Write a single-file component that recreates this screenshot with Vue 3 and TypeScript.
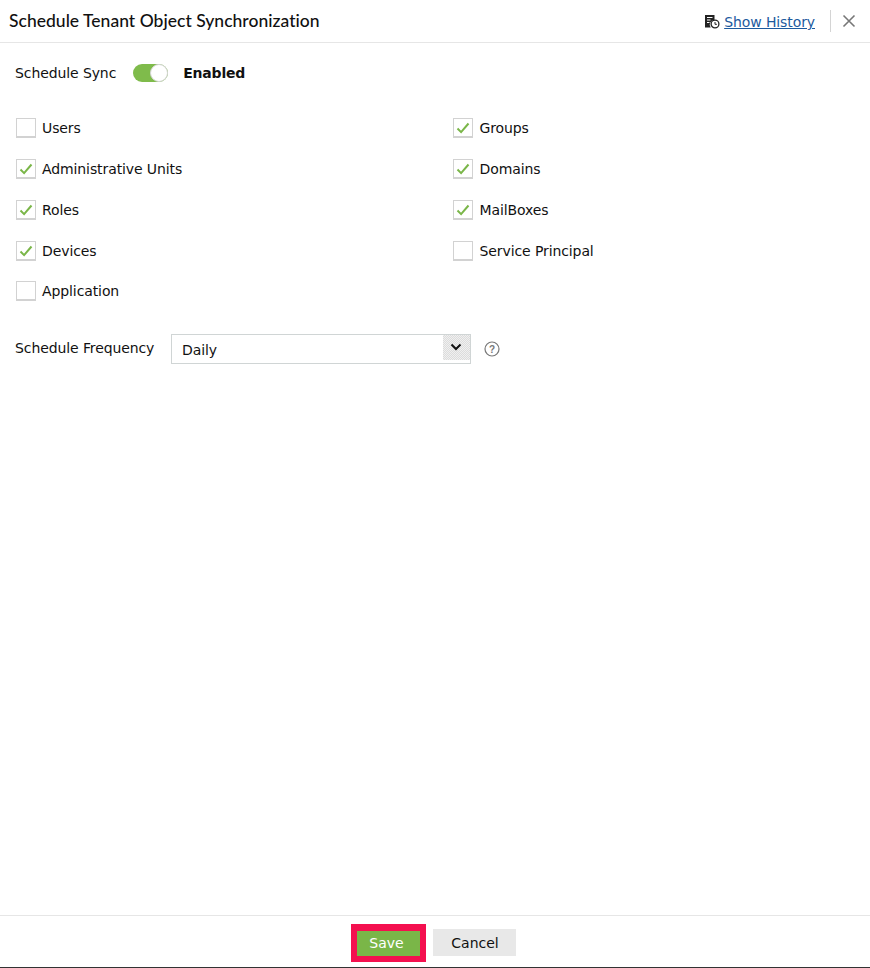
<script setup lang="ts">
const rows: { label: string; checked: boolean }[][] = [
  [{ label: 'Users', checked: false }, { label: 'Groups', checked: true }],
  [{ label: 'Administrative Units', checked: true }, { label: 'Domains', checked: true }],
  [{ label: 'Roles', checked: true }, { label: 'MailBoxes', checked: true }],
  [{ label: 'Devices', checked: true }, { label: 'Service Principal', checked: false }],
  [{ label: 'Application', checked: false }],
]
</script>

<template>
  <div class="page">
    <header class="head">
      <h1 class="title">Schedule Tenant Object Synchronization</h1>
      <div class="head-right">
        <svg class="hist-icon" width="16" height="15" viewBox="0 0 16 15">
          <path d="M1 1h9.500v5.200a4.500 4.500 0 0 0-3.800 7.300H1z" fill="#222" />
          <path d="M3 3.500h5.500M3 6h3.500M3 8.500h2.500" stroke="#fff" stroke-width="1" />
          <circle cx="11" cy="10" r="3.900" fill="#fff" stroke="#222" stroke-width="1.300" />
          <path d="M11 8v2.300h1.900" fill="none" stroke="#222" stroke-width="1" />
        </svg>
        <a class="hist-link" href="#">Show History</a>
        <span class="divider"></span>
        <svg class="close" width="14" height="14" viewBox="0 0 14 14">
          <path d="M1.500 1.500l11 11M12.500 1.500l-11 11" stroke="#777" stroke-width="1.600" />
        </svg>
      </div>
    </header>

    <main class="body">
      <div class="sync">
        <span class="text">Schedule Sync</span>
        <span class="toggle"><span class="knob"></span></span>
        <b class="enabled">Enabled</b>
      </div>

      <div class="checks">
        <div v-for="(row, i) in rows" :key="i" class="check-row">
          <label v-for="item in row" :key="item.label" class="check">
            <span class="box">
              <svg v-if="item.checked" width="14" height="12" viewBox="0 0 14 12">
                <path d="M1.500 6.500l3.600 3.600L12.500 1.500" fill="none" stroke="#7ab648" stroke-width="2" />
              </svg>
            </span>
            <span class="text">{{ item.label }}</span>
          </label>
        </div>
      </div>

      <div class="freq">
        <span class="text freq-label">Schedule Frequency</span>
        <div class="select">
          <span class="select-value">Daily</span>
          <span class="select-arrow">
            <svg width="12" height="8" viewBox="0 0 12 8">
              <path d="M1.500 1.500L6 6l4.500-4.500" fill="none" stroke="#111" stroke-width="2" />
            </svg>
          </span>
        </div>
        <svg class="help" width="16" height="16" viewBox="0 0 16 16">
          <circle cx="8" cy="8" r="7" fill="none" stroke="#777" stroke-width="1.200" />
          <text x="8" y="11.500" text-anchor="middle" font-size="10" font-weight="700" font-family="Liberation Sans, sans-serif" fill="#777">?</text>
        </svg>
      </div>
    </main>

    <footer class="foot">
      <span class="save-ring"><button class="btn save" type="button">Save</button></span>
      <button class="btn cancel" type="button">Cancel</button>
    </footer>
  </div>
</template>

<style>
html, body { margin: 0; background: #fff; }
</style>

<style scoped>
.page {
  width: 870px;
  height: 968px;
  display: flex;
  flex-direction: column;
  box-sizing: border-box;
  border-bottom: 1px solid #333;
  background: #fff;
  font-family: "DejaVu Sans", sans-serif;
  font-size: 14px;
  color: #111;
}
.head {
  height: 43px;
  box-sizing: border-box;
  border-bottom: 1px solid #e6e6e6;
  display: flex;
  align-items: center;
  justify-content: space-between;
  padding: 0 14px 0 9px;
}
.title {
  margin: 0 0 2px;
  font-family: Lato, sans-serif;
  font-size: 17.500px;
  font-weight: 500;
  letter-spacing: 0.020px;
  color: #111;
}
.head-right { display: flex; align-items: center; }
.hist-icon { margin: 1px 4px 0 0; }
.hist-link { color: #1d5a9e; text-decoration: underline; font-size: 14px; letter-spacing: -0.100px; padding-top: 2px; }
.divider { width: 1px; height: 22px; background: #d4d4d4; margin: 0 11px 0 15px; }
.close { display: block; }
.body { flex: 1; padding: 0 15px; }
.text { letter-spacing: -0.100px; }
.sync { display: flex; align-items: center; height: 20px; margin-top: 20px; }
.toggle {
  width: 35px;
  height: 18px;
  border-radius: 9px;
  background: #7fbb4b;
  margin-left: 17px;
  position: relative;
}
.knob {
  position: absolute;
  right: 0;
  top: 0;
  width: 18px;
  height: 18px;
  box-sizing: border-box;
  border-radius: 50%;
  background: #fff;
  border: 1px solid #d5d5d5;
}
.enabled { margin-left: 15px; font-size: 14px; letter-spacing: -0.200px; }
.checks { margin-top: 34px; margin-left: 1px; display: flex; flex-direction: column; }
.check-row { display: grid; grid-template-columns: 437px 1fr; height: 41px; align-items: start; }
.check-row:nth-child(4) { height: 40px; }
.check { display: flex; align-items: center; height: 22px; }
.box {
  width: 20px;
  height: 20px;
  box-sizing: border-box;
  border: 1px solid #d2d2d2;
  border-bottom-width: 2px;
  background: #fff;
  display: flex;
  align-items: center;
  justify-content: center;
  margin-right: 6px;
}
.check:nth-child(2) .box { margin-right: 6.500px; }
.freq { display: flex; align-items: center; margin-top: 13px; height: 30px; }
.freq-label { width: 156px; position: relative; top: -1px; }
.select {
  width: 300px;
  height: 30px;
  box-sizing: border-box;
  border: 1px solid #d0d5d5;
  display: flex;
  justify-content: space-between;
}
.select-value { padding: 7px 0 0 10px; font-size: 14px; letter-spacing: -0.100px; }
.select-arrow {
  width: 27px;
  height: 25px;
  padding: 0 2px 1px 0;
  box-sizing: border-box;
  background: repeating-conic-gradient(#dcdcdc 0 25%, #f0f0f0 0 50%) 0 0 / 2px 2px;
  display: flex;
  align-items: center;
  justify-content: center;
}
.help { margin-left: 13px; }
.foot {
  height: 52px;
  box-sizing: border-box;
  border-top: 1px solid #e6e6e6;
  display: flex;
  align-items: center;
  justify-content: center;
  gap: 7px;
  padding: 2px 3px 0 0;
}
.save-ring {
  display: block;
  box-sizing: border-box;
  border: 6px solid #f4104f;
  border-top-width: 7px;
  background: #f4104f;
}
.btn {
  border: 0;
  padding: 0;
  height: 25px;
  font-family: "DejaVu Sans", sans-serif;
  font-size: 14px;
  display: block;
}
.save { width: 63px; background: #7ab648; color: #fff; padding-right: 4px; }
.cancel { width: 83px; height: 27px; background: #e8e8e8; color: #111; margin-bottom: 1px; padding: 2px 0 0 1px; }
</style>
